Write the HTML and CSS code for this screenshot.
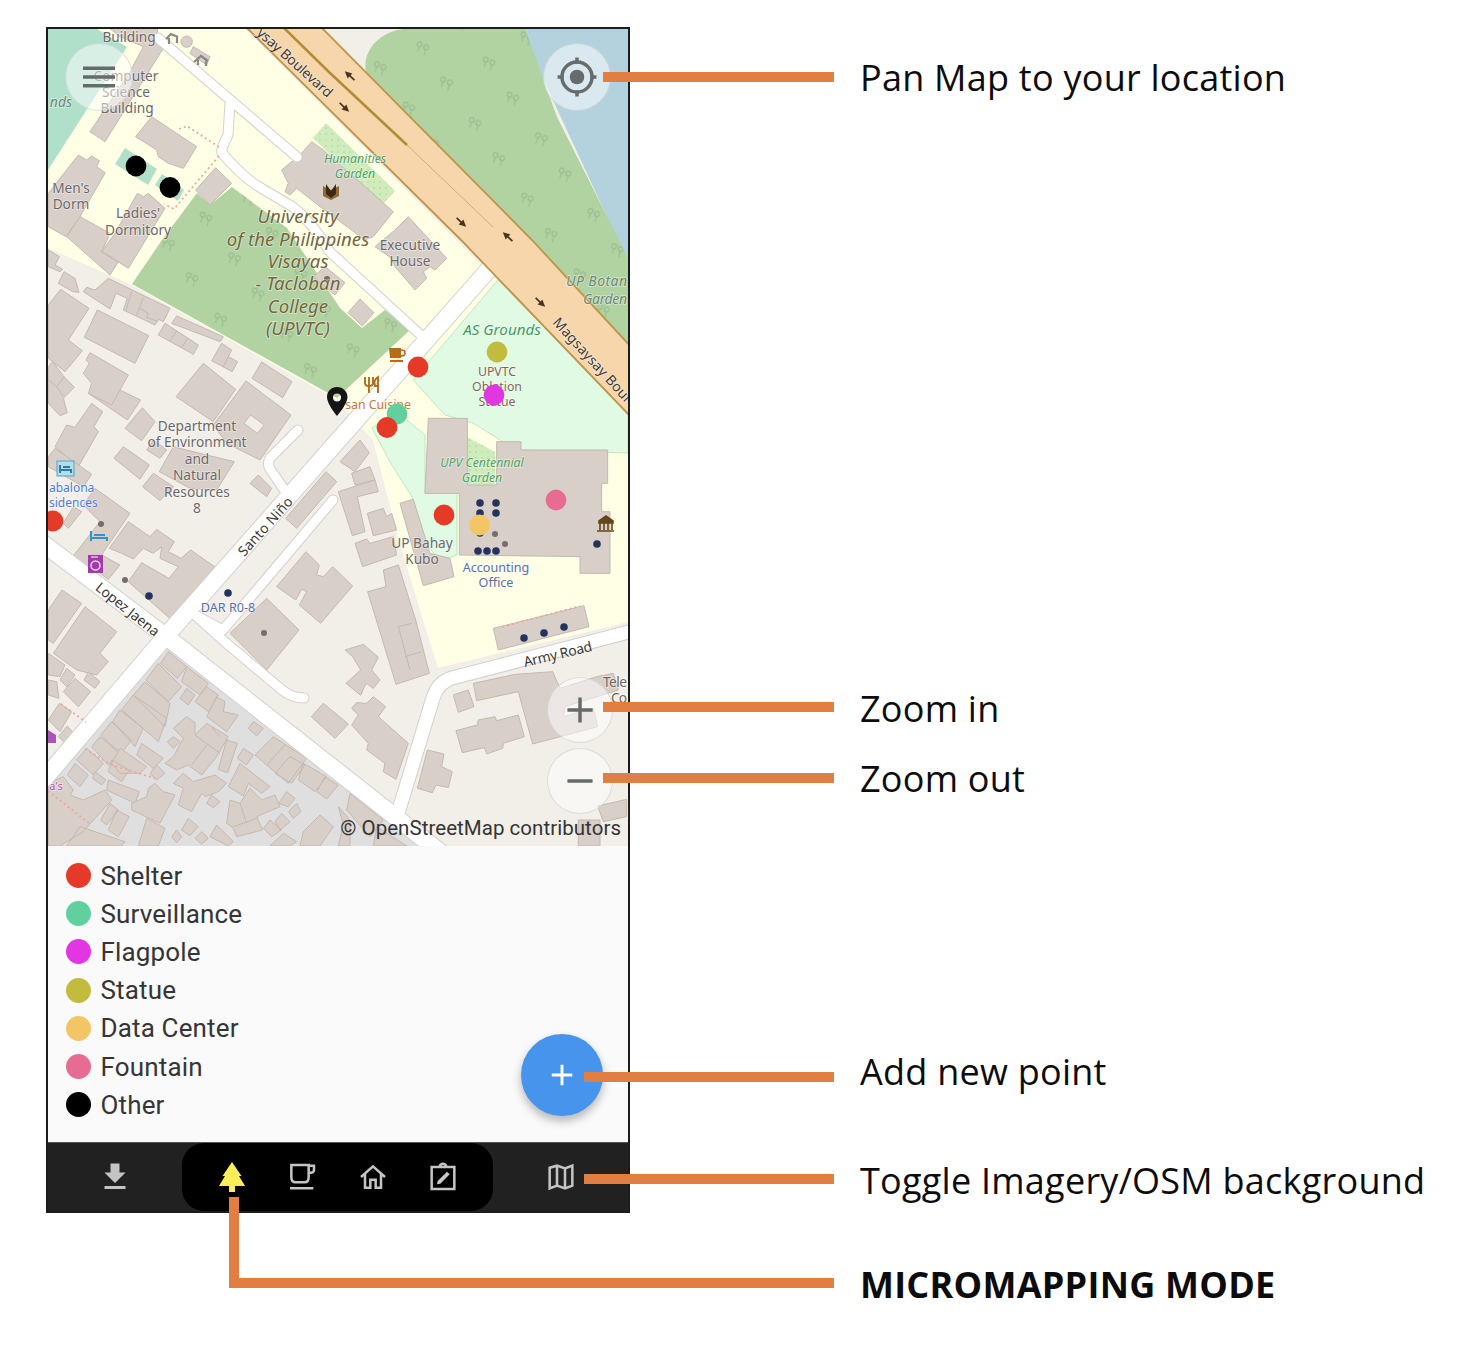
FILE: index.html
```html
<!DOCTYPE html>
<html lang="en">
<head>
<meta charset="utf-8">
<title>Micromapping mode guide</title>
<link rel="stylesheet" href="styles.css">
</head>
<body>
<main class="guide">
<section class="phone">
<div class="map">
<svg class="map-canvas" viewBox="48 29 580 817">
<defs>
<g id="trees" class="trees"><path d="M4 15V8M14 18V10M4 8l3-3M14 10l-3-3"/><circle cx="4" cy="4" r="3.5"/><circle cx="14" cy="6" r="3.5"/></g>
<pattern id="forest" width="68" height="62" patternUnits="userSpaceOnUse" patternTransform="rotate(13)"><use href="#trees" transform="translate(8 8) scale(.7)"/><use href="#trees" transform="translate(39 37) scale(.7)"/></pattern>
<pattern id="dots" width="6" height="6" patternUnits="userSpaceOnUse"><circle cx="2" cy="2" r=".8" fill="#a5d292"/></pattern>
<g id="arrow"><path d="M-6 0H3" stroke="#493522" stroke-width="1.7"/><path d="M0-3.500L7 0L0 3.500z" fill="#493522"/></g>
</defs>

<!-- land use -->
<path class="campus" d="M48 29H245L628 412V622L438 668L423 620L398 537L373 440L337 400L132 285L48 248z"/>
<path class="pitch" d="M48 29H97L127 47L48 170z"/>
<path class="pitch" d="M125 148L157 169L148 185L115 164zM162 174L184 190L178 201L155 185z"/>
<path fill="#f2efe9" d="M320 29H410V80L628 300V343z"/>
<path fill="#b4d1de" d="M520 29H628V262z"/>
<path class="wood" d="M403 29C380 32 362 50 366 72L532 240L628 343V258L557 117L525 29z"/>
<path class="wood" d="M197 193L210 205L232 187L287 228L340 308L362 328L385 310L410 330L337 398L132 284L162 240z"/>
<path fill="url(#forest)" d="M403 29C380 32 362 50 366 72L532 240L628 343V258L557 117L525 29zM232 187L287 228L340 308L362 328L385 310L410 330L337 398L132 284L190 203z"/>
<path class="grass" d="M498 280L628 413V453L522 450L505 443L473 423L445 415L413 380zM372 428L395 412L407 420L425 435V493H457V555L440 561L427 545L412 497L390 462z"/>
<path fill="#d0ebbc" d="M326 123L395 191L382 205L313 138zM467 437L495 452V485H467z"/>
<path fill="url(#dots)" d="M326 123L395 191L382 205L313 138zM467 437L495 452V485H467z"/>
<path fill="#dfdfdf" d="M168 645L432 846H48V782z"/>

<!-- buildings -->
<g class="bld">
<g transform="translate(40 20) scale(.33333)">
<path d="M190 10H355L350 50L370 85L195 365L150 335L270 155L310 80L240 50z"/>
<path d="M335 290L470 380L430 445L385 430L355 410L350 390L287 350z"/>
<path d="M115 405L140 420L155 408L178 422L170 440L196 458L120 590L78 650L25 620V520z"/>
<path d="M120 590L210 640L185 695L235 725L210 765L80 650zM292 520L310 530L325 520L375 565L265 745L185 695L225 640z"/>
<path d="M527 443L575 490L510 555L467 510z"/>
<path d="M815 365L850 390L1060 575L1000 650L975 660L840 560L770 505L750 525L735 515L745 490L725 450L780 405z"/>
<circle cx="440" cy="65" r="17"/><path d="M460 80L510 110L500 135L450 100z"/>
</g>
<g transform="translate(330 230) scale(.33333)"><path d="M235 -40L350 85L315 120L300 110L280 125L290 145L255 180L195 110L185 85L135 50L195 0z"/><path d="M90 207L132 248L97 288L54 248zM-15 110L45 158L15 195L-50 140z"/><path d="M295 618H412V660H295z"/></g>
<g transform="translate(40 230) scale(.33333)">
<path d="M25 60L58 80L45 105L68 118L60 125L25 110zM72 125L105 145L117 187L98 185L55 160z"/>
<path d="M62 178L147 235L85 330L127 362L75 425L25 385V225z"/>
<path d="M172 240L326 317L285 400L133 322z"/>
<path d="M150 368L265 435L240 480L302 510L262 570L145 490L155 460L130 430L148 400L138 390z"/>
<path d="M145 490L215 525L240 480"/>
<path d="M205 145L390 235L370 275L355 268L345 285L250 240L262 205L228 190L210 237L130 185L140 172L165 180z"/>
<path d="M275 185L258 240M310 203L290 255M300 235L325 250L320 262L355 275"/>
<path d="M410 258L550 320L540 335L395 280zM375 280L475 345L460 373L355 315zM410 303L390 333M443 325L425 352"/>
<path d="M545 340L575 360L565 380L593 395L577 425L515 392zM565 380L550 410"/>
<path d="M490 400L587 478L520 575L408 500z"/>
<path d="M665 396L756 455L728 503L636 445z"/>
<path fill-rule="evenodd" d="M618 453L753 555L660 690L560 640L520 585zM632 555L612 580L652 610L673 585z"/>
<path d="M307 533L345 575L305 632L255 595zM155 520L188 545L162 590L175 605L115 710L45 650L80 585L105 592z"/>
<path d="M38 395L72 440L103 472L70 505L82 548L60 557L25 520V410z"/><path d="M72 440L50 470L70 500M50 470L25 450"/>
</g>
<g transform="translate(40 440) scale(.33333)">
<path d="M45 25L155 103L130 140L25 80V50z"/>
<path d="M250 20L328 75L300 118L222 55zM340 100L400 140L360 182L308 140zM340 0L380 30L360 55L320 30zM400 20L480 40L583 65L530 150L450 145L358 95z"/>
<path d="M165 145L270 220L150 395L98 350L180 245L130 195zM100 200L125 215L85 265L70 250z"/>
<path d="M265 245L330 290L350 268L403 305L385 335L423 355L452 330L524 380L395 540L265 425L305 368L387 415L415 380L360 355L365 320L340 340L310 325L280 357L245 340L208 325z"/>
<path d="M185 345L240 375L205 418L160 385zM655 105L695 145L680 170L630 130zM858 95L890 125L770 265L737 235z"/>
<path d="M798 335L838 375L830 405L850 410L878 380L938 438L842 550L778 495L800 455L785 448L767 480L710 440z"/>
<path d="M680 475L777 570L680 690L570 580z"/>
<path d="M66 450L125 490L40 610L25 600V510zM135 500L230 575L180 640L205 665L170 705L110 690L40 640z"/>
</g>
<g transform="translate(330 440) scale(.33333)">
<path d="M295 -65H412V135H500V5H573V30H833V130H815V215H840V400H750V350L388 345V160H285z"/>
<path d="M490 565L762 497L777 560L505 630zM250 178L300 340L360 355L372 410L280 437L210 190z"/>
<path d="M90 0L118 38L75 95L30 65zM65 100L120 80L135 120L75 135z"/><path d="M25 155L135 120L145 155L82 170L105 275L67 287z"/>
<path d="M112 220L160 205L170 230L185 220L200 270L130 287zM75 310L110 297L120 310L190 290L200 345L98 380z"/>
<path d="M205 375L258 543L298 700L198 733L113 455L168 440L160 390zM205 560L245 550M205 560L240 690M225 650L275 635"/>
<path d="M45 630L100 613L145 652L125 690L150 720L130 745L108 730L92 766L48 730L92 690L68 650z"/>
</g>
<g transform="translate(330 640) scale(.33333)">
<path d="M80 188L110 190L130 170L167 200L145 230L235 310L198 418L160 395L165 370L110 330L115 310L65 255L85 225L65 205z"/>
<path d="M-20 190L55 252L15 295L-56 230z"/>
<path d="M370 165L415 150L432 200L385 217zM430 130L555 103L668 95L690 145L800 110L850 100L865 150L705 200L700 230L790 205L803 260L608 312L565 155L440 182z"/>
<path d="M378 272L442 255L445 240L495 230L500 242L565 225L583 290L520 310L518 325L470 342L463 323L397 338zM292 330L342 342L335 380L367 395L355 443L318 435L307 458L262 445z"/>
<path d="M803 498L890 478V530L820 545zM745 540H810V618H745z"/>
</g>
<g transform="translate(40 640) scale(.33333)">
<path d="M25 40L75 75L60 110L25 105zM80 85L105 105L80 140L60 120zM105 115L152 155L115 200L70 155zM145 95L180 125L165 145L132 120zM25 120L50 125L57 175L25 165zM58 190L95 215L60 275L25 240zM82 258L105 285L80 312L55 290z"/>
<path d="M385 35L440 80L412 115L362 70zM355 70L425 140L385 185L318 120zM315 125L390 190L375 260L280 165zM280 165L380 235L355 305L245 210zM240 210L310 265L285 320L218 245zM215 245L275 300L240 345L182 285zM305 310L370 355L340 385L290 345zM180 290L240 335L205 375L155 320zM140 325L190 370L160 405L110 360zM105 370L145 405L120 440L82 405z"/>
<path d="M240 325L320 380L300 400L240 400L215 370zM350 375L375 400L350 420L330 400zM165 395L198 420L185 435L158 415zM205 420L298 455L285 490L200 450zM215 360L268 390L245 425L205 395z"/>
<path d="M440 230L465 248L465 285L500 250L565 290L530 350L485 405L445 375L410 390L375 370L400 350L430 295L400 265zM400 290L420 305L400 325L382 305z"/>
<path d="M465 285L540 340M500 315L455 375M515 262L540 290"/>
<path d="M440 80L505 130L480 165L425 125zM440 145L465 165L445 195L420 175zM500 140L535 165L505 215L465 185zM530 170L555 185L550 215L595 225L560 275L500 230zM560 300L592 310L563 398L535 388zM640 245L670 265L650 288L625 265zM610 325L640 345L620 375L592 355z"/>
<path d="M430 400L460 425L525 405L560 430L535 455L495 470L485 460L455 515L415 495L430 445L400 430zM515 465L540 485L520 503L500 490z"/>
<path d="M600 370L690 440L665 460L625 430L610 468L565 440zM700 290L800 355L745 430L645 345zM750 350L795 375L755 430L705 400zM790 370L860 410L825 455L775 420zM855 410L895 435L860 477L830 455zM735 315L680 375"/>
<path d="M630 445L665 480L705 465L720 500L650 530L668 570L590 590L580 565L560 550L570 480L600 490zM740 455L765 475L745 500L715 490zM770 490L783 515L760 535L745 515zM725 520L750 545L720 570L705 545zM690 540L725 570L695 590L670 565zM600 490L620 550M580 560L650 535"/>
<path d="M345 430L370 455L405 465L360 550L275 510L275 490L320 470L325 445zM320 535L375 565L355 618H295zM445 535L475 560L450 587L425 570zM530 555L580 605L565 618L510 590zM485 575L505 595L485 612L465 595z"/>
<path d="M195 450L215 480L165 535L130 575L60 618H25V430L70 410L100 450L90 465L130 480zM210 490L235 510L200 555L182 540zM230 510L268 530L235 590L205 570zM120 560L255 605L245 618H80zM840 525L880 560L840 618H780L790 575zM895 500L930 540V618H895L910 555zM730 580L770 605L750 618H690zM410 570L425 590L410 608L395 590z"/>
<path d="M930 460L1030 540L990 590L920 510zM1010 560L1100 618H1000z"/>
</g>
</g>

<!-- roads -->
<g class="casing">
<path class="w9" d="M158 38L297 157M230 103L228 135Q220 151 222 153Q240 174 256 185L293 207Q312 222 330 252L423 337"/>
<path class="w9" d="M298 430L270 458Q267 464 270 469L288 495M333 500L223 630L195 615L225 642L282 690Q292 698 304 698"/>
<path class="w14" d="M640 629L452 678Q438 682 433 698L398 813"/>
<path class="w17" d="M490 268L165 637L45 778"/>
<path class="w17" d="M40 541L168 638L440 852"/>
</g>
<g class="road">
<path class="w9" d="M158 38L297 157M230 103L228 135Q220 151 222 153Q240 174 256 185L293 207Q312 222 330 252L423 337"/>
<path class="w9" d="M298 430L270 458Q267 464 270 469L288 495M333 500L223 630L195 615L225 642L282 690Q292 698 304 698"/>
<path class="w14" d="M640 629L452 678Q438 682 433 698L398 813"/>
<path class="w17" d="M490 268L165 637L45 778"/>
<path class="w17" d="M40 541L168 638L440 852"/>
</g>
<path class="highway" d="M245 26L462 241L632 418V348L532 240L320 26z"/>
<path d="M284 28L330 73L407 145" fill="none" stroke="#b08c35" stroke-width="2.5"/>
<path d="M407 145L493 227" fill="none" stroke="#d6ad70" stroke-width="1"/>
<use href="#arrow" transform="translate(350 76) rotate(222)"/><use href="#arrow" transform="translate(344 107) rotate(43)"/><use href="#arrow" transform="translate(461 222) rotate(43)"/><use href="#arrow" transform="translate(508 237) rotate(222)"/><use href="#arrow" transform="translate(540 302) rotate(43)"/>
<path class="footpath" d="M179 129L187 126L219 147M219 156L174 209L164 204M61 704L86 722M85 749L112 765L157 779M48 791L90 824M502 627L580 606"/>

<!-- place icons -->
<g fill="none" stroke="#888" stroke-width="2.200"><path d="M166 39L171 34L178 37M169 38V44M177 37V43M194 62L201 56L208 61M198 60V65M206 61V66"/></g>
<path d="M323 186L331 190L339 186V196L331 200L323 196z" fill="#8b6a35"/><path d="M326 184L331 191L336 184V194L331 198L326 194z" fill="#3d2911"/>
<path d="M389 348H401V358H390zM390 360H403V362H390z" fill="#b66b1c"/><circle cx="402" cy="353" r="3" fill="none" stroke="#b66b1c" stroke-width="1.5"/>
<path d="M365 377V383Q365 386 369 386V393M369 377V386M373 377V383Q373 386 369 386M378 393V377Q373 380 375 386H378" fill="none" stroke="#b66b1c" stroke-width="1.900"/>
<path d="M599 521L606 516L613 521V523H599zM600 523V530M604 523V530M608 523V530M612 523V530M597 531H614" fill="#65451a" stroke="#65451a" stroke-width="1.6"/>
<rect x="57" y="461" width="17" height="15" fill="#b9dae6" stroke="#4ba5cc"/><path d="M60 465V473M60 470H71V473M63 467H70" fill="none" stroke="#277fa5" stroke-width="2"/>
<path d="M91 531V541M91 538H107V541M94 535H105" fill="none" stroke="#2798cb" stroke-width="2"/>
<rect x="88" y="555" width="15" height="18" fill="#a33aaa"/><circle cx="95.500" cy="565.500" r="4.500" fill="none" stroke="#ead4e8" stroke-width="1.5"/><path d="M91 557H98" stroke="#fff"/>
<path d="M48 730L56 735V743H48z" fill="#ad55b5"/>
<g fill="#24325e"><circle cx="149" cy="596" r="3.800"/><circle cx="228" cy="593" r="3.800"/><circle cx="480" cy="503" r="3.800"/><circle cx="496" cy="503" r="3.800"/><circle cx="480" cy="513" r="3.800"/><circle cx="496" cy="513" r="3.800"/><circle cx="480" cy="533" r="3.800"/><circle cx="478" cy="551" r="3.800"/><circle cx="487" cy="551" r="3.800"/><circle cx="496" cy="551" r="3.800"/><circle cx="597" cy="544" r="3.800"/><circle cx="524" cy="638" r="3.800"/><circle cx="544" cy="633" r="3.800"/><circle cx="564" cy="627" r="3.800"/></g>
<g fill="#766e6b"><circle cx="101" cy="524" r="3"/><circle cx="125" cy="580" r="3"/><circle cx="264" cy="633" r="3"/><circle cx="495" cy="534" r="3"/><circle cx="505" cy="544" r="3"/><circle cx="327" cy="279" r="3"/></g>

<!-- labels -->
<g class="label">
<text x="129" y="42">Building</text><text x="126" y="81">Computer</text><text x="126" y="97">Science</text><text x="127" y="113">Building</text>
<text x="71" y="193">Men's</text><text x="71" y="209">Dorm</text><text x="138" y="218">Ladies'</text><text x="138" y="235">Dormitory</text>
<text x="410" y="250">Executive</text><text x="410" y="266">House</text>
<text x="197" y="431">Department</text><text x="197" y="447">of Environment</text><text x="197" y="464">and</text><text x="197" y="480">Natural</text><text x="197" y="497">Resources</text><text x="197" y="513">8</text>
<text x="422" y="548">UP Bahay</text><text x="422" y="564">Kubo</text>
<text class="start" x="603" y="687" textLength="24">Tele</text><text class="start" x="611" y="703" textLength="16">Co</text>
</g>
<g class="label uni"><text x="298" y="223">University</text><text x="298" y="246">of the Philippines</text><text x="298" y="268">Visayas</text><text x="298" y="290">- Tacloban</text><text x="298" y="313">College</text><text x="298" y="335">(UPVTC)</text></g>
<g class="label garden"><text x="355" y="163">Humanities</text><text x="355" y="178">Garden</text><text x="482" y="467">UPV Centennial</text><text x="482" y="482">Garden</text></g>
<text class="label grounds" x="502" y="335">AS Grounds</text>
<g class="label botanic"><text class="start" x="566" y="286" textLength="61">UP Botan</text><text class="start" x="583" y="304" textLength="44">Garden</text></g>
<text class="label botanic" x="61" y="107">nds</text>
<g class="label statue"><text x="497" y="376">UPVTC</text><text x="497" y="391">Oblation</text><text x="497" y="406">Statue</text></g>
<text class="label cafe" x="378" y="409">san Cuisine</text>
<g class="label office"><text x="496" y="572">Accounting</text><text x="496" y="587">Office</text><text x="228" y="612">DAR R0-8</text></g>
<g class="label hotel"><text class="start" x="49" y="492">abalona</text><text class="start" x="49" y="507">sidences</text></g>
<text class="label shop" x="56" y="790">a's</text>
<g class="label street">
<text class="start" transform="translate(256 34) rotate(42)" textLength="96">ysay Boulevard</text>
<text class="start" transform="translate(552 323) rotate(47.500)" textLength="108">Magsaysay Boul</text>
<text transform="translate(266 527) rotate(-48)" y="4" textLength="74">Santo Niño</text>
<text transform="translate(127 610) rotate(38.500)" y="4" textLength="77">Lopez Jaena</text>
<text transform="translate(558 655) rotate(-13.500)" y="4" textLength="70">Army Road</text>
</g>

<!-- mapped points -->
<g fill="#e63a28"><circle cx="418" cy="367" r="10.400"/><circle cx="444" cy="515" r="10.400"/><circle cx="53" cy="521" r="10.400"/></g>
<circle cx="397" cy="414" r="10.400" fill="#60d19e"/><circle cx="387" cy="427.500" r="10.400" fill="#e63a28"/>
<circle cx="497" cy="352" r="10.400" fill="#c2bc3e"/><circle cx="494" cy="395" r="10.400" fill="#e136e1"/><circle cx="479.500" cy="525" r="10.400" fill="#f2c664"/><circle cx="556" cy="500" r="10.400" fill="#e66c94"/>
<circle cx="136" cy="166" r="10.400"/><circle cx="170" cy="187.500" r="10.400"/>
<path fill="#151515" fill-rule="evenodd" d="M337 387C331 387 327 391.500 327 397C327 404 337 416 337 416C337 416 347.500 404 347.500 397C347.500 391.500 343 387 337 387zM337 393.500a4 4 0 1 1 0 8a4 4 0 1 1 0-8z"/>
</svg>
<button class="round menu" aria-label="Menu"><svg viewBox="0 0 68 68"><path d="M17.500 25H50.500M17.500 34H50.500M17.500 43H50.500"/></svg></button>
<button class="round locate" aria-label="Pan to location"><svg viewBox="0 0 68 68"><circle cx="34" cy="34" r="15.500"/><circle class="dot" cx="34" cy="34" r="7.500"/><path d="M34 14V20M34 48V54M14 34H20M48 34H54"/></svg></button>
<button class="round zoom-in" aria-label="Zoom in"><svg viewBox="0 0 66 66"><path d="M20 33H46M33 20V46"/></svg></button>
<button class="round zoom-out" aria-label="Zoom out"><svg viewBox="0 0 66 66"><path d="M20 33H46"/></svg></button>
<span class="credit">© OpenStreetMap contributors</span>
</div>
<div class="panel">
<ul class="legend">
<li><i class="swatch shelter"></i>Shelter</li><li><i class="swatch surveillance"></i>Surveillance</li><li><i class="swatch flagpole"></i>Flagpole</li><li><i class="swatch statue-c"></i>Statue</li><li><i class="swatch data"></i>Data Center</li><li><i class="swatch fountain"></i>Fountain</li><li><i class="swatch other"></i>Other</li>
</ul>
<button class="add" aria-label="Add new point"><svg viewBox="0 0 84 84"><path d="M31.500 42H52.500M42 31.500V52.500"/></svg></button>
</div>
<nav class="tabs">
<div class="side left"><svg class="icon solid" viewBox="0 0 24 24"><path d="M19 9h-4V3H9v6H5l7 7 7-7zM5 18v2h14v-2H5z"/></svg></div>
<div class="pill">
<svg class="icon tree" viewBox="0 0 32 32"><path d="M16 1L25.500 15H23L29 25H19V31H13V25H3L9 15H6.500z"/></svg>
<svg class="icon line cup" viewBox="0 0 24 24"><path d="M4 3H17V12Q17 16 14 16H7Q4 16 4 12zM17 3.500H21V7Q21 9 17 9M3 20.500H20.500"/></svg>
<svg class="icon line" viewBox="0 0 24 24"><path d="M3 12L12 4L21 12M6 10V20H10V14H14V20H18V10"/></svg>
<svg class="icon line" viewBox="0 0 24 24"><path d="M3.500 4.500H20.500V21H3.500zM9.500 4Q10 2 12 2T14.500 4"/><path d="M7.500 17.500L8 15L15 8L17 10L10 17z" fill="#c9c9c9" stroke="none"/></svg>
</div>
<div class="side right"><svg class="icon line" viewBox="0 0 24 24"><path d="M3.500 5L9 3.500L15 5.500L20.500 3.500V18.500L15 20.500L9 18.500L3.500 20.500zM9 3.500V18.500M15 5.500V20.500"/></svg></div>
</nav>
</section>

<div class="callout c-pan"><i class="line"></i><span>Pan Map to your location</span></div>
<div class="callout c-in"><i class="line"></i><span>Zoom in</span></div>
<div class="callout c-out"><i class="line"></i><span>Zoom out</span></div>
<div class="callout c-add"><i class="line"></i><span>Add new point</span></div>
<div class="callout c-toggle"><i class="line"></i><span>Toggle Imagery/OSM background</span></div>
<div class="callout c-mode"><i class="line"></i><span>MICROMAPPING MODE</span></div>
</main>
</body>
</html>
```
FILE: styles.css
```css
* { box-sizing: border-box; }
body { margin: 0; background: #fff; }
.guide { position: relative; width: 1462px; height: 1358px; padding: 27px 0 0 46px; overflow: hidden; }
.phone { width: 584px; height: 1186px; border: 2px solid #1c1c1c; display: flex; flex-direction: column; font-family: Roboto, sans-serif; background: #fafafa; }
button { border: 0; padding: 0; }
button svg { display: block; width: 100%; height: 100%; }
.map { position: relative; height: 817px; flex: none; }
.map-canvas { display: block; width: 580px; height: 817px; background: #f2efe9; }

.trees { fill: none; stroke: #97bd8e; stroke-width: 1.5; }
.campus { fill: #ffffe5; }
.pitch { fill: #b0dfca; }
.wood { fill: #b1d2a1; }
.grass { fill: #e0fae3; stroke: #b9dfb9; stroke-width: .8; }
.bld path, .bld circle { fill: #d8cfc9; stroke: #c5b8af; stroke-width: 3; }
.casing, .road { fill: none; stroke-linecap: round; stroke-linejoin: round; }
.casing { stroke: #d3d0cd; }
.casing .w9 { stroke-width: 11px; }
.casing .w14 { stroke-width: 15px; }
.casing .w17 { stroke-width: 18.5px; }
.road { stroke: #fff; }
.road .w9 { stroke-width: 9px; }
.road .w14 { stroke-width: 13px; }
.road .w17 { stroke-width: 16.5px; }
.highway { fill: #f6d6aa; stroke: #bd9549; stroke-width: 1.8; }
.footpath { fill: none; stroke: #f1a49d; stroke-width: 1.8; stroke-dasharray: 2 3; }

.label { font-family: "Noto Sans", sans-serif; font-size: 13.7px; fill: #6a6868; text-anchor: middle; stroke: rgba(255,255,255,.5); stroke-width: 1.5px; paint-order: stroke; }
.label .start, .label.start { text-anchor: start; }
.uni { font-size: 18.6px; font-style: italic; fill: #73663c; }
.garden { font-size: 12.3px; font-style: italic; fill: #4da261; }
.grounds { font-size: 15.2px; font-style: italic; fill: #479960; }
.botanic { font-size: 14px; font-style: italic; fill: #6c8975; }
.statue { font-size: 12.3px; fill: #896356; }
.cafe { font-size: 12.3px; fill: #c9793c; }
.office { font-size: 12.6px; fill: #596eb0; }
.hotel { font-size: 12px; fill: #4b7ed8; }
.shop { font-size: 11px; fill: #a95ab2; }
.street { font-size: 14px; fill: #3d3933; }

.round { position: absolute; width: 68px; height: 68px; border-radius: 50%; background: rgba(255,255,255,.5); border: 1px solid rgba(190,200,200,.55); }
.round svg { fill: none; stroke: #666b6b; stroke-width: 3.6; }
.round .dot { fill: #666b6b; stroke: none; }
.menu { left: 17px; top: 14px; }
.locate { left: 495px; top: 14px; }
.zoom-in, .zoom-out { left: 499px; width: 66px; height: 66px; }
.zoom-in { top: 648px; }
.zoom-out { top: 719px; }
.credit { position: absolute; right: 7px; bottom: 5px; font-size: 20.5px; line-height: 26px; letter-spacing: .04px; color: #343434; white-space: nowrap; }

.panel { position: relative; height: 296px; flex: none; padding: 10.5px 0 0 17.5px; background: #fafafa; }
.legend { list-style: none; margin: 0; padding: 0; font-size: 26px; letter-spacing: .15px; color: #353535; }
.legend li { display: flex; align-items: center; gap: 10px; height: 38.2px; }
.swatch { width: 25px; height: 25px; border-radius: 50%; }
.shelter { background: #e63a28; }
.surveillance { background: #60d19e; }
.flagpole { background: #e136e1; }
.statue-c { background: #c2bc3e; }
.data { background: #f2c664; }
.fountain { background: #e66c94; }
.other { background: #000; }
.add { position: absolute; right: 25px; top: 188px; width: 82px; height: 82px; border-radius: 50%; background: #4694eb; box-shadow: 0 5px 10px rgba(0,0,0,.28); }
.add svg { stroke: #fff; stroke-width: 3; }

.tabs { display: flex; flex: 1; background: #212121; border-top: 1px solid #555; }
.side { display: flex; align-items: center; justify-content: center; }
.left { width: 134px; }
.right { flex: 1; }
.pill { width: 311px; border-radius: 22px; background: #000; display: flex; align-items: center; justify-content: center; gap: 38.5px; }
.icon { width: 32px; height: 32px; }
.solid { width: 36px; height: 36px; fill: #c4c4c4; }
.tree { fill: #fbee59; }
.icon.line { fill: none; stroke: #c4c4c4; stroke-width: 1.9; }

.callout { position: absolute; display: flex; align-items: center; height: 50px; gap: 26px; font-family: "Open Sans", sans-serif; font-size: 36px; line-height: 50px; letter-spacing: .25px; color: #0c0c0c; white-space: nowrap; }
.callout span { position: relative; top: 1px; }
.callout .line { height: 10px; background: #e07f41; }
.c-pan { left: 603px; top: 52px; }
.c-in { left: 603px; top: 682px; }
.c-out { left: 603px; top: 753px; }
.c-pan .line, .c-in .line, .c-out .line { width: 231px; }
.c-add { left: 584px; top: 1052px; }
.c-toggle { left: 584px; top: 1154px; }
.c-add .line, .c-toggle .line { width: 250px; }
.c-add span { top: -5px; }
.c-in span, .c-toggle span { top: 2px; }
.c-mode { left: 229px; top: 1197px; height: 91px; align-items: flex-end; font-weight: 700; }
.c-mode .line { width: 605px; height: 91px; background: none; border: solid #e07f41; border-width: 0 0 10px 10px; }
.c-mode span { top: 22px; }
```
